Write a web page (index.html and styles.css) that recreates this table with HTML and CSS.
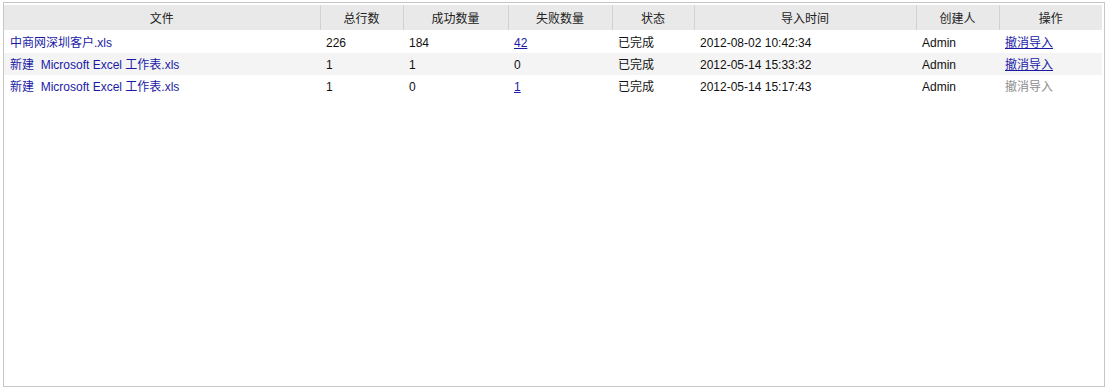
FILE: index.html
```html
<!DOCTYPE html>
<html lang="zh-CN">
<head>
<meta charset="utf-8">
<title>导入记录</title>
<link rel="stylesheet" href="styles.css">
</head>
<body>
<div class="panel">
  <table class="grid">
    <colgroup>
      <col class="c1"><col class="c2"><col class="c3"><col class="c4"><col class="c5"><col class="c6"><col class="c7"><col class="c8">
    </colgroup>
    <thead>
      <tr>
        <th>文件</th><th>总行数</th><th>成功数量</th><th>失败数量</th><th>状态</th><th>导入时间</th><th>创建人</th><th>操作</th>
      </tr>
    </thead>
    <tbody>
      <tr>
        <td><a class="file" href="#">中商网深圳客户.xls</a></td>
        <td>226</td><td>184</td><td><a class="ul" href="#">42</a></td><td>已完成</td>
        <td>2012-08-02 10:42:34</td><td>Admin</td><td><a class="ul" href="#">撤消导入</a></td>
      </tr>
      <tr class="alt">
        <td><a class="file" href="#">新建&nbsp; Microsoft Excel 工作表.xls</a></td>
        <td>1</td><td>1</td><td>0</td><td>已完成</td>
        <td>2012-05-14 15:33:32</td><td>Admin</td><td><a class="ul" href="#">撤消导入</a></td>
      </tr>
      <tr>
        <td><a class="file" href="#">新建&nbsp; Microsoft Excel 工作表.xls</a></td>
        <td>1</td><td>0</td><td><a class="ul" href="#">1</a></td><td>已完成</td>
        <td>2012-05-14 15:17:43</td><td>Admin</td><td><span class="disabled">撤消导入</span></td>
      </tr>
    </tbody>
  </table>
</div>
</body>
</html>
```
FILE: styles.css
```css
html, body {
  margin: 0;
  padding: 0;
  background: #ffffff;
}
body {
  font-family: Arial, "Liberation Sans", "Noto Sans CJK SC", sans-serif;
  font-size: 12px;
  color: #111;
}
.panel {
  box-sizing: border-box;
  width: 1102px;
  height: 385px;
  margin: 2px 0 0 3px;
  border: 1px solid #c6c6c6;
  padding: 2px 1px 0 0;
}
.grid {
  width: 1098px;
  border-collapse: collapse;
  table-layout: fixed;
}
.c1 { width: 316px; }
.c2 { width: 83px; }
.c3 { width: 105px; }
.c4 { width: 104px; }
.c5 { width: 82px; }
.c6 { width: 222px; }
.c7 { width: 83px; }
.c8 { width: 103px; }
.grid th {
  height: 25px;
  padding: 0;
  background: #e9e9e9;
  font-weight: normal;
  text-align: center;
  color: #222;
  border-left: 1px solid #d2d2d2;
  border-bottom: 1px solid #ffffff;
}
.grid th:first-child {
  border-left: none;
}
.grid td {
  height: 19px;
  line-height: 19px;
  padding: 3px 0 0 6px;
  vertical-align: baseline;
  white-space: nowrap;
  overflow: hidden;
}
.grid tr.alt td {
  background: #f4f4f4;
}
.file {
  color: #1a1aa6;
  text-decoration: none;
}
.ul {
  color: #1a1aa6;
  text-decoration: underline;
}
.disabled {
  color: #8c8c8c;
}
```
